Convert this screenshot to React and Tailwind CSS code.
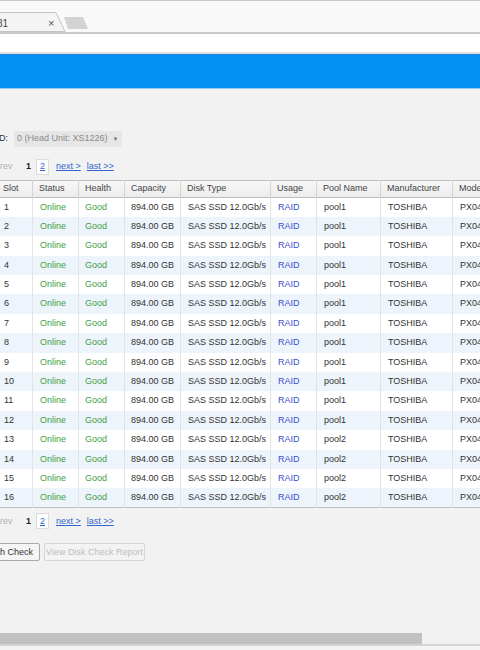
import React from 'react';

const rows = Array.from({ length: 16 }, (_, i) => ({
  slot: i + 1,
  pool: i < 12 ? 'pool1' : 'pool2',
}));

const cols = [
  { label: 'Slot', w: 'w-[36px]' },
  { label: 'Status', w: 'w-[46px]' },
  { label: 'Health', w: 'w-[46px]' },
  { label: 'Capacity', w: 'w-[56px]' },
  { label: 'Disk Type', w: 'w-[90px]' },
  { label: 'Usage', w: 'w-[46px]' },
  { label: 'Pool Name', w: 'w-[64px]' },
  { label: 'Manufacturer', w: 'w-[72px]' },
  { label: 'Model', w: 'w-[90px]' },
];

const Pager = () => (
  <div className="flex items-center h-[16px] text-[9px] whitespace-nowrap">
    <span className="text-[#b0b0b0] ml-[-5px] w-[30px]">prev</span>
    <span className="font-bold text-[#222] ml-[1px]">1</span>
    <span className="ml-[5px] h-[16px] w-[13px] flex items-center justify-center bg-white border border-[#dcdcdc] text-[#3366cc] underline">2</span>
    <a className="ml-[7px] text-[#3366cc] underline">next &gt;</a>
    <a className="ml-[6px] text-[#3366cc] underline">last &gt;&gt;</a>
  </div>
);

export default function App() {
  return (
    <div className="w-[480px] h-[650px] overflow-hidden flex flex-col bg-[#f2f2f2] font-['Liberation_Sans',Arial,sans-serif] text-[#333]">
      {/* browser tab strip */}
      <div className="h-[32px] border-t border-[#c9c9c9] bg-[#f9f9f9] flex items-end relative">
        <svg width="90" height="20" viewBox="0 0 90 20" className="block">
          <path d="M-2 0.5 H56 L65 19.5 H-2 Z" fill="#f4f4f4" stroke="#c4c4c4" />
          <path d="M64 5 H83 L88 17 H68 Z" fill="#d3d3d3" />
        </svg>
        <span className="absolute left-[-3px] top-[15px] text-[10px] text-[#444]">81</span>
        <span className="absolute left-[48px] top-[14px] text-[11px] text-[#555]">×</span>
      </div>
      {/* address bar */}
      <div className="h-[22px] bg-white border-t-2 border-[#cacaca] border-b-2 border-b-[#dfe3df]" />
      {/* blue header */}
      <div className="h-[35px] bg-[#0490f5] border-t border-[#1a7fd6] border-b border-b-[#8fcbf8]" />

      <div className="flex-1 flex flex-col bg-[#f2f2f2] text-[9px]">
        <div className="mt-[42px] flex items-center h-[16px] whitespace-nowrap">
          <span className="ml-[-1px] text-[#333]">D:</span>
          <div className="ml-[6px] h-[16px] w-[108px] bg-[#e6e6e6] flex items-center px-[3px] text-[#8a8a8a]">
            <span>0 (Head Unit: XS1226)</span>
            <span className="ml-[5px] text-[6px] text-[#777]">▼</span>
          </div>
        </div>

        <div className="mt-[12px]">
          <Pager />
        </div>

        <table className="mt-[5px] ml-[-4px] table-fixed border-collapse border border-[#bdbdbd] bg-white w-[546px] whitespace-nowrap">
          <colgroup>
            {cols.map((c) => (
              <col key={c.label} className={c.w} />
            ))}
          </colgroup>
          <thead>
            <tr className="h-[17px] bg-gradient-to-b from-[#f8f8f8] to-[#ececec] border-b border-[#bdbdbd]">
              {cols.map((c) => (
                <th key={c.label} className="text-left font-normal text-[#444] pl-[6px] border-r border-[#d4d4d4]">
                  {c.label}
                </th>
              ))}
            </tr>
          </thead>
          <tbody>
            {rows.map((r) => (
              <tr key={r.slot} className={`h-[19.4px] ${r.slot % 2 === 0 ? 'bg-[#edf4fc]' : 'bg-white'}`}>
                <td className="pl-[7px] border-r border-[#e3e3e3]">{r.slot}</td>
                <td className="pl-[7px] border-r border-[#e3e3e3] text-[#44a044]">Online</td>
                <td className="pl-[6px] border-r border-[#e3e3e3] text-[#44a044]">Good</td>
                <td className="pl-[6px] border-r border-[#e3e3e3]">894.00 GB</td>
                <td className="pl-[7px] border-r border-[#e3e3e3]">SAS SSD 12.0Gb/s</td>
                <td className="pl-[7px] border-r border-[#e3e3e3] text-[#3c4fd0]">RAID</td>
                <td className="pl-[7px] border-r border-[#e3e3e3]">{r.pool}</td>
                <td className="pl-[7px] border-r border-[#e3e3e3]">TOSHIBA</td>
                <td className="pl-[7px]">PX04SVB080</td>
              </tr>
            ))}
          </tbody>
        </table>

        <div className="mt-[5px]">
          <Pager />
        </div>

        <div className="mt-[14px] flex items-center gap-[4px] whitespace-nowrap">
          <button className="ml-[-28px] h-[18px] px-[6px] bg-[#f5f5f5] border border-[#a9a9a9] rounded-[2px] text-[#333] text-[9px]">
            Health Check
          </button>
          <button className="h-[18px] w-[101px] bg-[#f3f3f3] border border-[#d6d6d6] rounded-[2px] text-[#bdbdbd] text-[9px]">
            View Disk Check Report
          </button>
        </div>
      </div>

      {/* horizontal scrollbar */}
      <div className="h-[11px] bg-[#f1f1f1] flex">
        <div className="w-[422px] h-full bg-[#c1c1c1]" />
      </div>
      <div className="h-[6px] bg-[#f4f4f4] border-t-2 border-[#d4d4d4]" />
    </div>
  );
}
